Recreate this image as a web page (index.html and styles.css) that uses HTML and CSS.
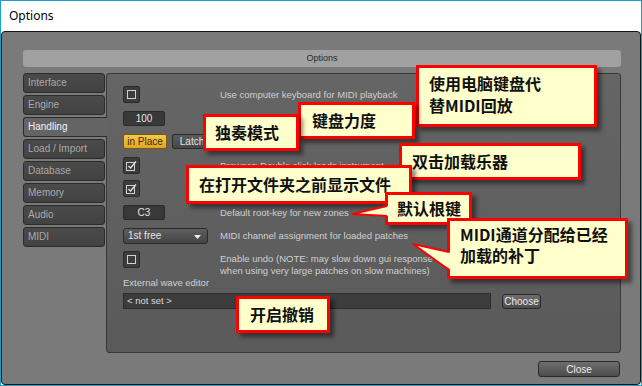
FILE: index.html
```html
<!DOCTYPE html>
<html lang="en">
<head>
    <meta charset="UTF-8">
    <title>Options</title>
    <link rel="stylesheet" href="styles.css">
</head>
<body>
    <div class="window">
        <div class="titlebar">Options</div>

        <div class="frame">
            <div class="header">Options</div>

            <div class="content">
                <ul class="tabs">
                    <li class="tab">Interface</li>
                    <li class="tab">Engine</li>
                    <li class="tab active">Handling</li>
                    <li class="tab">Load / Import</li>
                    <li class="tab">Database</li>
                    <li class="tab">Memory</li>
                    <li class="tab">Audio</li>
                    <li class="tab">MIDI</li>
                </ul>

                <div class="panel">
                    <div class="rows">
                        <div class="row">
                            <div class="ctl"><span class="check"><svg width="9" height="9" viewBox="0 0 9 9"><rect x="0.5" y="0.5" width="8" height="8" fill="none" stroke="#cfcfcf"/></svg></span></div>
                            <div class="label">Use computer keyboard for MIDI playback</div>
                        </div>
                        <div class="row">
                            <div class="ctl"><span class="value">100</span></div>
                            <div class="label">Use keyboard Velocity</div>
                        </div>
                        <div class="row">
                            <div class="ctl">
                                <button class="toggle on">in Place</button>
                                <button class="toggle">Latch</button>
                            </div>
                            <div class="label">Solo mode</div>
                        </div>
                        <div class="row">
                            <div class="ctl"><span class="check"><svg width="11" height="11" viewBox="0 0 11 11"><rect x="0.5" y="2.5" width="8" height="8" fill="none" stroke="#cfcfcf"/><path d="M2.5 6 L4.5 8 L10 1.5" fill="none" stroke="#e6e6e6" stroke-width="1.2"/></svg></span></div>
                            <div class="label">Browser: Double click loads instrument</div>
                        </div>
                        <div class="row">
                            <div class="ctl"><span class="check"><svg width="11" height="11" viewBox="0 0 11 11"><rect x="0.5" y="2.5" width="8" height="8" fill="none" stroke="#cfcfcf"/><path d="M2.5 6 L4.5 8 L10 1.5" fill="none" stroke="#e6e6e6" stroke-width="1.2"/></svg></span></div>
                            <div class="label">Show files before folders</div>
                        </div>
                        <div class="row">
                            <div class="ctl"><span class="value">C3</span></div>
                            <div class="label">Default root-key for new zones</div>
                        </div>
                        <div class="row">
                            <div class="ctl">
                                <span class="select">1st free
                                    <svg class="arrow" width="7" height="4" viewBox="0 0 7 4"><path d="M0 0 H7 L3.5 4 Z" fill="#eeeeee"/></svg>
                                </span>
                            </div>
                            <div class="label">MIDI channel assignment for loaded patches</div>
                        </div>
                        <div class="row top">
                            <div class="ctl"><span class="check"><svg width="9" height="9" viewBox="0 0 9 9"><rect x="0.5" y="0.5" width="8" height="8" fill="none" stroke="#cfcfcf"/></svg></span></div>
                            <div class="label multi">Enable undo (NOTE: may slow down gui response<br>when using very large patches on slow machines)</div>
                        </div>
                    </div>

                    <div class="editor">
                        <div class="editor-label">External wave editor</div>
                        <div class="editor-line">
                            <div class="field">&lt; not set &gt;</div>
                            <button class="btn choose">Choose</button>
                        </div>
                    </div>
                </div>
            </div>

            <div class="footer">
                <button class="btn close">Close</button>
            </div>
        </div>

        <!-- annotation callouts -->
        <div class="callout c1">使用电脑键盘代<br>替MIDI回放</div>
        <div class="callout c2">键盘力度</div>
        <div class="callout c3">独奏模式</div>
        <div class="callout c4">双击加载乐器</div>
        <div class="callout c5">在打开文件夹之前显示文件</div>
        <div class="callout c6">默认根键
            <svg class="wedge" width="37" height="14" viewBox="0 0 37 14"><polygon points="1,10 37,2 37,12" fill="#ffffcc"/><polyline points="36,2 1,10 36,12" fill="none" stroke="#ff0000" stroke-width="2"/></svg>
        </div>
        <div class="callout c7">MIDI通道分配给已经<br>加载的补丁
            <svg class="wedge" width="39" height="30" viewBox="0 0 39 30"><polygon points="1,2 39,11 39,28" fill="#ffffcc"/><polyline points="37,10 1,2 37,28" fill="none" stroke="#ff0000" stroke-width="2"/></svg>
        </div>
        <div class="callout c8">开启撤销</div>
    </div>
</body>
</html>
```

FILE: styles.css
```css
* {
    box-sizing: border-box;
}
body {
    margin: 0;
    background: #ffffff;
    font-family: "Liberation Sans", Arial, sans-serif;
}
.window {
    position: relative;
    width: 642px;
    height: 386px;
    border: 1px solid #1a9fc9;
    background: #ffffff;
    display: flex;
    flex-direction: column;
}
.titlebar {
    height: 30px;
    padding-left: 8px;
    font: 12px "Noto Sans", sans-serif;
    line-height: 30px;
    color: #000000;
}
.frame {
    flex: 1;
    background: #7a7a7a;
    border: 1px solid #141414;
    border-radius: 4px;
    padding: 18px 19px 0 21px;
    display: flex;
    flex-direction: column;
}
.header {
    height: 17px;
    background: #a1a1a1;
    border-radius: 3px;
    text-align: center;
    font-size: 9px;
    line-height: 17px;
    color: #2a2a2a;
}
.content {
    display: flex;
    margin-top: 6px;
    height: 280px;
}
.tabs {
    width: 82px;
    list-style: none;
    margin: 0;
    padding: 0;
    display: flex;
    flex-direction: column;
    gap: 2px;
    position: relative;
    z-index: 1;
}
.tab {
    height: 20px;
    background: linear-gradient(#4a4a4a, #424242);
    border: 1px solid #2c2c2c;
    border-radius: 3px;
    color: #a9a9a9;
    font-size: 10px;
    line-height: 18px;
    padding-left: 4px;
}
.tab.active {
    background: #646464;
    color: #f2f2f2;
    border-right: none;
    margin-right: -2px;
    border-radius: 3px 0 0 3px;
}
.panel {
    flex: 1;
    margin-left: 1px;
    border: 1px solid #383838;
    border-radius: 3px;
    background: linear-gradient(#656565, #5a5a5a);
    padding: 12px 0 0 16px;
}
.rows {
    display: flex;
    flex-direction: column;
    gap: 6.5px;
}
.row {
    display: flex;
    align-items: center;
    min-height: 17px;
}
.row.top {
    align-items: flex-start;
}
.ctl {
    width: 97px;
    flex: none;
    display: flex;
    gap: 5px;
}
.label {
    font-size: 9.5px;
    color: #cfcfcf;
    white-space: nowrap;
}
.label.multi {
    line-height: 12px;
    padding-top: 2px;
}
.check {
    width: 17px;
    height: 17px;
    background: #3d3d3d;
    border: 1px solid #2a2a2a;
    border-radius: 2px;
    display: flex;
    align-items: center;
    justify-content: center;
}
.value {
    width: 42px;
    height: 15px;
    background: #393939;
    border: 1px solid #2a2a2a;
    border-radius: 2px;
    color: #e4e4e4;
    font-size: 10px;
    line-height: 13px;
    text-align: center;
}
.toggle {
    height: 15px;
    padding: 0;
    border: 1px solid #2a2a2a;
    border-radius: 2px;
    background: linear-gradient(#5c5c5c, #474747);
    color: #e4e4e4;
    font: 10px "Liberation Sans", Arial, sans-serif;
    width: 40px;
}
.toggle.on {
    width: 44px;
    background: linear-gradient(#f7c84c, #e3a423);
    border-color: #7a5810;
    color: #3a2a08;
}
.select {
    position: relative;
    width: 85px;
    height: 16px;
    background: linear-gradient(#5e5e5e, #444444);
    border: 1px solid #2a2a2a;
    border-radius: 3px;
    color: #e4e4e4;
    font-size: 10px;
    line-height: 14px;
    padding-left: 4px;
}
.arrow {
    position: absolute;
    right: 6px;
    top: 6px;
}
.editor-label {
    font-size: 9.5px;
    color: #cfcfcf;
    line-height: 12px;
}
.editor-line {
    display: flex;
    align-items: flex-start;
    margin-top: 4px;
}
.field {
    width: 368px;
    height: 16px;
    background: #3c3c3c;
    border: 1px solid #2c2c2c;
    color: #dcdcdc;
    font-size: 9.5px;
    line-height: 14px;
    padding-left: 3px;
}
.btn {
    padding: 0;
    border: 1px solid #2a2a2a;
    border-radius: 3px;
    background: linear-gradient(#6e6e6e, #4c4c4c);
    color: #ececec;
    font: 10px "Liberation Sans", Arial, sans-serif;
}
.choose {
    width: 39px;
    height: 15px;
    margin-left: 11px;
    margin-top: 1px;
}
.footer {
    display: flex;
    justify-content: flex-end;
    margin-top: 8px;
    padding-right: 1px;
}
.close {
    width: 82px;
    height: 16px;
}
.callout {
    position: absolute;
    background: #ffffcc;
    border: 3px solid #ff0000;
    box-shadow: 4px 4px 4px rgba(0, 0, 0, 0.45);
    font: bold 16px "Noto Sans CJK SC", sans-serif;
    line-height: 22px;
    color: #111111;
    white-space: nowrap;
}
.wedge {
    position: absolute;
}
.c1 { left: 415px; top: 64px; width: 181px; height: 62px; padding: 4px 0 0 10px; }
.c2 { left: 297px; top: 101px; width: 117px; height: 37px; padding: 4px 0 0 11px; }
.c3 { left: 202px; top: 113px; width: 96px; height: 37px; padding: 4px 0 0 9px; }
.c4 { left: 398px; top: 142px; width: 182px; height: 37px; padding: 4px 0 0 10px; }
.c5 { left: 185px; top: 164px; width: 226px; height: 39px; padding: 5px 0 0 10px; }
.c6 { left: 384px; top: 191px; width: 87px; height: 33px; padding: 2px 0 0 9px; }
.c6 .wedge { left: -37px; top: 9px; }
.c7 { left: 446px; top: 217px; width: 181px; height: 61px; padding: 3px 0 0 10px; line-height: 21px; }
.c7 .wedge { left: -38px; top: 21px; }
.c8 { left: 235px; top: 295px; width: 94px; height: 37px; padding: 4px 0 0 11px; }
```
